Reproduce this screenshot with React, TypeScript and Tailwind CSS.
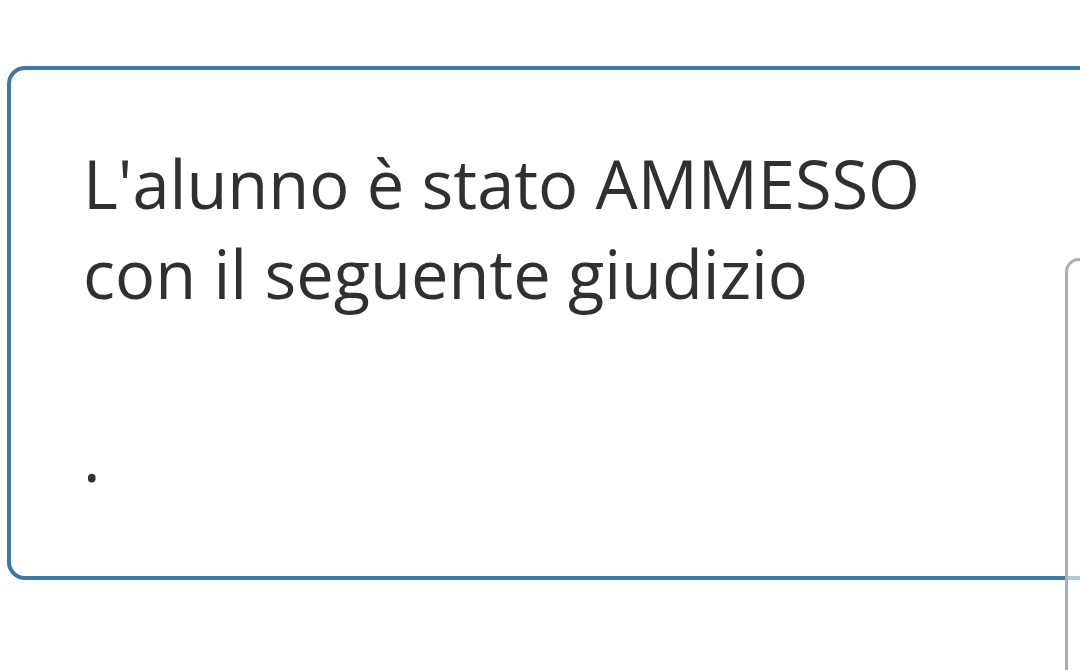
import React from 'react'

export default function App() {
  return (
    <div className="relative h-[670px] w-[1080px] overflow-hidden bg-white" style={{ fontFamily: '"Open Sans", sans-serif' }}>
      <div className="pt-[66px] pl-[7px]">
        {/* esito card */}
        <div className="w-[1120px] rounded-[18px] border-[4px] border-[#3b77a9] px-[72px] pt-[69px] pb-[74px] text-[66.75px] leading-[90px] text-[#303030]">
          <p>
            L'alunno è stato AMMESSO
            <br />
            con il seguente giudizio
          </p>
          <p className="mt-[93px]">.</p>
        </div>
      </div>

      {/* next card peeking in from the right */}
      <div className="absolute left-[1065px] top-[258px] h-[500px] w-[300px] rounded-[14px] border-[3px] border-[#adadad] bg-white/60" />
    </div>
  )
}
